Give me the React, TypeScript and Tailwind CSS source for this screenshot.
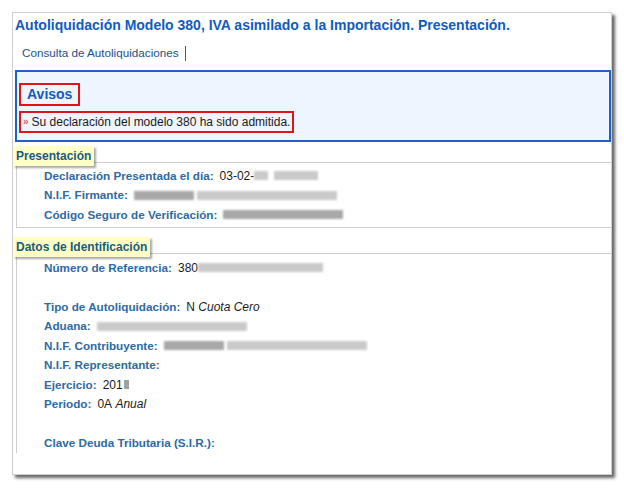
import React from "react"

function Blur({ w, dark = false }: { w: number; dark?: boolean }) {
  return (
    <span
      className={
        "inline-block h-[9px] align-middle blur-[1.2px] " + (dark ? "bg-[#a8a8a8]" : "bg-[#cacaca]")
      }
      style={{ width: w }}
    />
  )
}

function Row({ label, children }: { label: string; children?: React.ReactNode }) {
  return (
    <div className="flex h-[19.5px] items-center whitespace-nowrap">
      <span className="text-[11.7px] font-bold text-[#2e6aa3]">{label}</span>
      {children && <span className="ml-[6px] flex items-center text-[#1a1a1a]">{children}</span>}
    </div>
  )
}

function Tag({ children }: { children: React.ReactNode }) {
  return (
    <div className="relative z-10 inline-block bg-[#ffffc6] px-[3px] py-[2px] text-[12px] font-bold leading-[16px] text-[#1a5b7c] shadow-[2px_2px_2px_rgba(0,0,0,0.35)]">
      {children}
    </div>
  )
}

export default function App() {
  return (
    <div className="min-h-screen bg-white pl-[12px] pt-[12px] font-['Liberation_Sans',Arial,sans-serif] text-[12px]">
      <div className="h-[463px] w-[600px] border border-[#cfcfcf] bg-white shadow-[3px_3px_3px_rgba(0,0,0,0.6)]">
        <h1 className="pl-[2px] pt-[3px] text-[14px] font-bold leading-[18px] text-[#0e5cbf]">
          Autoliquidación Modelo 380, IVA asimilado a la Importación. Presentación.
        </h1>
        <div className="mt-[11px] flex items-center pl-[9px] leading-[16px]">
          <span className="text-[11.7px] text-[#1c4f8f]">Consulta de Autoliquidaciones</span>
          <span className="ml-[6px] h-[15px] w-px bg-[#555]" />
        </div>

        {/* Avisos */}
        <div className="mt-[9px] ml-[2px] h-[72px] border-2 border-[#1f5fc7] bg-[#eef5fe] pl-[2px] pt-[11px]">
          <div className="inline-block border-2 border-[#e0141a] px-[6px] pb-[2px] pt-[1px] text-[14px] font-bold leading-[16px] text-[#1557c0]">
            Avisos
          </div>
          <div className="mt-[5px]">
            <span className="inline-flex items-center border-2 border-[#e0141a] px-[2px] py-[1px] leading-[16px] text-[#1a1a1a]">
              <span className="mr-[3px] text-[10px] text-[#d02020]">»</span>
              Su declaración del modelo 380 ha sido admitida.
            </span>
          </div>
        </div>

        {/* Presentación */}
        <div className="mt-[4px]">
          <Tag>Presentación</Tag>
          <div className="-mt-[4px] ml-[3px] h-[66px] border-y border-l border-[#cfcfcf] pl-[27px] pt-[3px]">
            <Row label="Declaración Presentada el día:">
              03-02-<Blur w={14} /><span className="ml-[6px]" /><Blur w={44} />
            </Row>
            <Row label="N.I.F. Firmante:">
              <Blur w={60} dark /><span className="ml-[3px]" /><Blur w={140} />
            </Row>
            <Row label="Código Seguro de Verificación:">
              <Blur w={120} dark />
            </Row>
          </div>
        </div>

        {/* Datos de Identificación */}
        <div className="mt-[9px]">
          <Tag>Datos de Identificación</Tag>
          <div className="-mt-[4px] ml-[3px] border-t border-l border-[#cfcfcf] pl-[27px] pt-[4px]">
            <Row label="Número de Referencia:">
              380<Blur w={125} />
            </Row>
            <div className="h-[19.5px]" />
            <Row label="Tipo de Autoliquidación:">
              N&nbsp;<i>Cuota Cero</i>
            </Row>
            <Row label="Aduana:">
              <Blur w={150} />
            </Row>
            <Row label="N.I.F. Contribuyente:">
              <Blur w={60} dark /><span className="ml-[3px]" /><Blur w={140} />
            </Row>
            <Row label="N.I.F. Representante:" />
            <Row label="Ejercicio:">
              201<span className="ml-px inline-block h-[9px] w-[5px] bg-[#a0a0a0]" />
            </Row>
            <Row label="Periodo:">
              0A&nbsp;<i>Anual</i>
            </Row>
            <div className="h-[19.5px]" />
            <Row label="Clave Deuda Tributaria (S.I.R.):" />
          </div>
        </div>
      </div>
    </div>
  )
}
